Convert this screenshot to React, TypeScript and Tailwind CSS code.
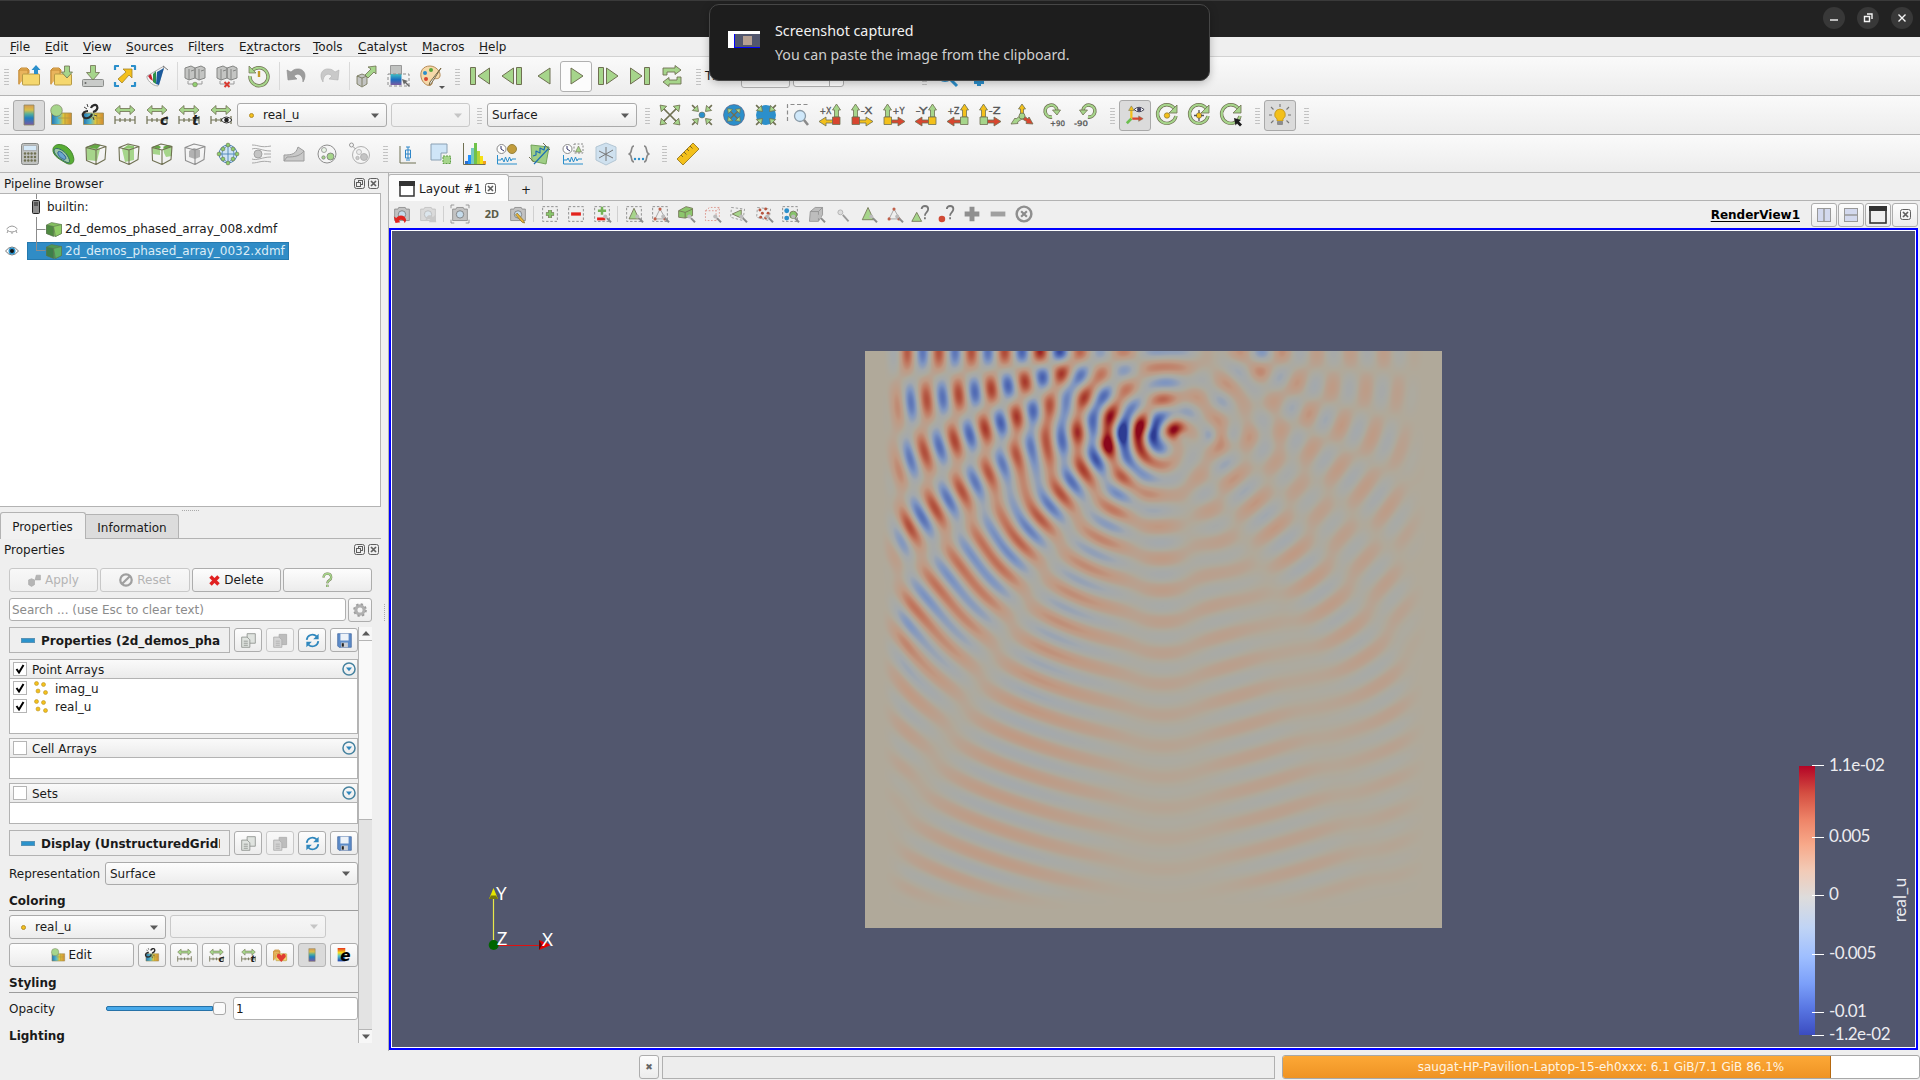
import { useEffect, useRef, type ReactNode } from "react";

type Kids = { children?: ReactNode };

const G = "#a6d58b";
const E = "#6f7052";
const Y = "#f3c01b";
const R = "#d8452f";
const B = "#2b8fcb";

/* ---------- wave field ---------- */

const FIELD = 577;
const WAVE_NUMBER = (2 * Math.PI) / 30.5;
const SOURCE_DEPTH = 84;
const AMPLITUDES = [
  -16, -4, 6, -2, -8, -1, 5, -2, 8, 14, -10, 12, 19, -13, 19, 19, -11, 28, -1, -2, 11, 1, -13, 2, 5, -6, -10, 0,
];
const RED_RAMP = [[176, 169, 154], [183, 162, 145], [191, 154, 132], [192, 120, 96], [172, 68, 50], [138, 4, 26]];
const BLUE_RAMP = [[176, 169, 154], [171, 170, 162], [164, 169, 172], [128, 150, 192], [80, 106, 180], [44, 58, 146]];
const STOPS = [0, 0.08, 0.25, 0.5, 0.8, 1.05];

const smooth = (a: number, b: number, v: number) => {
  const t = Math.min(1, Math.max(0, (v - a) / (b - a)));
  return t * t * (3 - 2 * t);
};
const bump = (x: number, y: number, cx: number, cy: number, rx: number, ry: number) =>
  Math.exp(-(((x - cx) / rx) ** 2) - ((y - cy) / ry) ** 2);

function fieldAt(x: number, y: number) {
  const w = smooth(15, 46, x) * smooth(12, 60, FIELD - x) * smooth(14, 60, FIELD - y);
  if (w === 0) return 0;
  let sum = 0;
  for (let n = 0; n < 14; n++) {
    const sx = 235 + n * 10;
    for (const sy of [SOURCE_DEPTH, -SOURCE_DEPTH]) {
      const d = Math.hypot(x - sx, y - sy, 6);
      const fall = Math.sqrt(d / 30);
      sum += (AMPLITUDES[2 * n] * Math.cos(WAVE_NUMBER * d) + AMPLITUDES[2 * n + 1] * Math.sin(WAVE_NUMBER * d)) / fall;
    }
  }
  const beam = 1 + 0.3 * smooth(260, 120, x) * smooth(420, 250, y) * smooth(110, 190, y);
  const core = 1 - 0.45 * bump(x, y, 294, 90, 13, 15);
  return ((sum * w) / 100) * beam * core + 0.4 * bump(x, y, 310, 78, 12, 9) - 0.35 * bump(x, y, 289, 76, 6, 14);
}

function WaveField() {
  const ref = useRef<HTMLCanvasElement>(null);
  useEffect(() => {
    const ctx = ref.current!.getContext("2d")!;
    const img = ctx.createImageData(FIELD, FIELD);
    for (let y = 0; y < FIELD; y++) {
      for (let x = 0; x < FIELD; x++) {
        const v = fieldAt(x, y);
        const m = Math.min(1.04, Math.abs(v));
        const ramp = v > 0 ? RED_RAMP : BLUE_RAMP;
        let i = 0;
        while (i < 4 && m > STOPS[i + 1]) i++;
        const t = (m - STOPS[i]) / (STOPS[i + 1] - STOPS[i]);
        const o = (y * FIELD + x) * 4;
        for (let c = 0; c < 3; c++) img.data[o + c] = ramp[i][c] * (1 - t) + ramp[i + 1][c] * t;
        img.data[o + 3] = 255;
      }
    }
    ctx.putImageData(img, 0, 0);
  }, []);
  return <canvas ref={ref} width={FIELD} height={FIELD} className="block h-[577px] w-[577px]" />;
}

/* ---------- icon helpers ---------- */

function Ic({ children, s = 22 }: Kids & { s?: number }) {
  return (
    <svg width={s} height={s} viewBox="0 0 22 22" fill="none" strokeLinejoin="round" className="shrink-0 overflow-visible">
      {children}
    </svg>
  );
}

const Folder = () => (
  <>
    <path d="M1 19V5l2-2h6l2 2v3" fill="#e9b45c" stroke="#c58a35" />
    <path d="M1 19.500V5h9v4" fill="#e9b45c" stroke="#c58a35" />
    <rect x="4.500" y="9" width="17" height="11" rx="1" fill="#f5d76e" stroke="#b79a45" />
  </>
);
const OpenIcon = () => <Ic><Folder /><path d="M18 0l4.500 5h-2.500v4h-4V5h-2.500z" fill={B} /></Ic>;
const RecentIcon = () => <Ic><Folder /><path d="M14.500 1h5v6h3l-5.500 6-5.500-6h3z" fill={G} stroke={E} strokeWidth=".8" /></Ic>;
const SaveDataIcon = () => (
  <Ic>
    <rect x=".5" y="14.500" width="21" height="7" rx="1" fill="#c9cbc9" stroke="#8b8d8b" />
    <path d="M8.500 .5h5v7h4L11 15 4.500 7.500h4z" fill={G} stroke={E} strokeWidth=".8" />
    <circle cx="3.500" cy="18" r="1" fill="#666" />
  </Ic>
);
const ExtractIcon = () => (
  <Ic>
    <path d="M1 5V1h4M17 1h4v4M21 17v4h-4M5 21H1v-4" stroke={B} strokeWidth="2.200" />
    <path d="M18 4v9l-3-3-7 8-4-4 8-7-3-3z" fill={Y} stroke="#a4842a" strokeWidth=".8" />
  </Ic>
);
const StateIcon = () => (
  <Ic>
    <path d="M18 1L1 11c-1 3 5 10 11 10z" fill="#f6f6f6" stroke="#999" strokeWidth=".8" />
    <path d="M2 11l3-2 2 7-3-2z" fill="#c8202f" />
    <path d="M7 9l3-3 0 13-3-2z" fill="#2d8f4a" />
    <path d="M11 7l7-4-5 17-3-1z" fill="#1b5a9c" />
    <path d="M17 1l5 4" stroke="#777" />
  </Ic>
);
const Server = ({ bad }: { bad?: boolean }) => (
  <Ic>
    <path d="M1 3l6-2 4 2v10l-6 2-4-2zM11 3l6-2 4 2v10l-6 2-4-2z" fill="#c4c5c3" stroke="#858684" />
    <path d="M5 4v11M15 4v11M7 6l3-1M17 6l3-1" stroke="#858684" />
    <path d="M4 16v3h14v-3" stroke="#9a9a9a" />
    {bad ? <path d="M8.500 17l5 5m0-5l-5 5" stroke="#d93a31" strokeWidth="2" /> : <circle cx="11" cy="19.500" r="2.300" fill="#8fd070" stroke={E} strokeWidth=".6" />}
  </Ic>
);
const TimerIcon = () => (
  <Ic>
    <path d="M4 6a9 9 0 1 1-2 5" stroke={E} strokeWidth="3.400" />
    <path d="M4 6a9 9 0 1 1-2 5" stroke={G} strokeWidth="2" />
    <path d="M1 1v7h7z" fill={G} stroke={E} strokeWidth=".7" />
    <path d="M11 6v6" stroke="#c59a2a" strokeWidth="2.400" />
  </Ic>
);
const UndoIcon = ({ flip }: { flip?: boolean }) => (
  <Ic>
    <path transform={flip ? "translate(22 0) scale(-1 1)" : undefined} d="M1 5l1 10 9 -1-3-3c4-4 9-1 9 6 5-8 0-14-6-13-2 0-4 1-6 3z" fill={flip ? "#c9c9c9" : "#9c9c9c"} stroke={flip ? "#b0b0b0" : "#8b8b8b"} strokeWidth=".6" />
  </Ic>
);
const FindIcon = () => (
  <Ic>
    <path d="M1 11l5-2 5 2v8l-5 3-5-3z" fill="#c3c4c2" stroke={E} strokeWidth=".8" />
    <path d="M1 11l5 2 5-2M6 13v8" stroke={E} strokeWidth=".8" />
    <path d="M20 1v8l-2-2-6 6-3-3 6-6-3-2z" fill={G} stroke={E} strokeWidth=".8" />
  </Ic>
);
const Spectrum = ({ id }: { id: string }) => (
  <linearGradient id={id} x1="0" y1="0" x2="0" y2="1">
    <stop offset="0" stopColor="#d79a52" /><stop offset=".25" stopColor="#d8bf4a" /><stop offset=".45" stopColor="#55b09a" />
    <stop offset=".65" stopColor="#1f7fc0" /><stop offset="1" stopColor="#7a5aa0" />
  </linearGradient>
);
const SelectColorIcon = () => (
  <Ic>
    <defs><linearGradient id="sp1" x1="0" y1="0" x2="0" y2="1"><stop offset="0" stopColor="#3fc0c4" /><stop offset=".5" stopColor="#1c6fc0" /><stop offset="1" stopColor="#7a5aa0" /></linearGradient></defs>
    <rect x="2.500" y=".5" width="11" height="9" fill="#c0c2c0" stroke="#999" />
    <rect x="2.500" y="9" width="11" height="11" fill="url(#sp1)" />
    <path d="M0 9h21v12H0z" stroke="#8a8a8a" strokeDasharray="3 2" />
    <path d="M14 14l6 2-2 1 4 4-1 1-4-4-1 2z" fill="#666" />
  </Ic>
);
const PaletteIcon = () => (
  <Ic>
    <path d="M10 1C3 1 0 6 1 12s7 10 10 8-1-5 2-6 6 1 7-3S16 1 10 1z" fill="#f6d9a9" stroke="#b58a55" />
    <circle cx="5" cy="8" r="2" fill={B} /><circle cx="11" cy="5" r="2" fill="#5aa63c" /><circle cx="6" cy="14" r="2" fill={R} />
    <path d="M21 3L11 19l-2 1 1-3z" fill="#eee" stroke="#7a6a45" />
    <path d="M19 21h6l-3 3z" fill="#555" />
  </Ic>
);

const tri = "stroke-[#6f7052]";
const FirstIcon = () => <Ic><path d="M1.500 2.500h5v17h-5zM20.500 3v16L9 11z" fill={G} className={tri} /></Ic>;
const PrevIcon = () => <Ic><path d="M15.500 2.500h5v17h-5zM12.500 3v16L1 11z" fill={G} className={tri} /></Ic>;
const BackIcon = () => <Ic><path d="M17 3v16L5 11z" fill={G} className={tri} /></Ic>;
const PlayIcon = () => <Ic><path d="M6 3v16l12-8z" fill={G} className={tri} /></Ic>;
const NextIcon = () => <Ic><path d="M1.500 2.500h5v17h-5zM9.500 3v16L21 11z" fill={G} className={tri} /></Ic>;
const LastIcon = () => <Ic><path d="M15.500 2.500h5v17h-5zM1.500 3v16L13 11z" fill={G} className={tri} /></Ic>;
const LoopIcon = () => (
  <Ic>
    <path d="M2 10V3h12V.500L20 5l-6 4.500V7H6v3zM20 12v7H8v2.500L2 17l6-4.500V15h8v-3z" fill={G} stroke={E} strokeWidth=".9" />
  </Ic>
);

const ColorBarIcon = ({ s = 22 }: { s?: number }) => (
  <Ic s={s}><defs><Spectrum id="sp2" /></defs><rect x="6" y="1" width="10" height="20" fill="url(#sp2)" stroke="#8a8563" strokeWidth=".8" /></Ic>
);
const Heat = ({ id }: { id: string }) => (
  <>
    <defs><linearGradient id={id}><stop offset="0" stopColor="#2473b0" /><stop offset=".35" stopColor="#57bccb" /><stop offset=".6" stopColor="#e0c63c" /><stop offset="1" stopColor="#cf8a34" /></linearGradient></defs>
    <rect x="1.500" y="9" width="20" height="11.500" fill={`url(#${id})`} stroke="#9a8c50" strokeWidth=".8" />
    <path d="M8 14h7v6M15 9v5h6" stroke="#b49a3e" strokeWidth=".9" />
  </>
);
const EditMapIcon = ({ s = 22 }: { s?: number }) => <Ic s={s}><Heat id="h1" /><circle cx="6.500" cy="6.500" r="5.800" fill={G} stroke={E} strokeWidth=".6" /></Ic>;
const SeparateMapIcon = ({ s = 22 }: { s?: number }) => (
  <Ic s={s}>
    <Heat id="h2" />
    <path d="M6 7c-3 0-6 2-5 5s5 3 8 0l1-2M9 4c1-3 5-4 6-2s0 5-4 6" stroke="#2b2b2b" strokeWidth="2.200" />
    <path d="M2 3l3 2M5 0l1 3M12 11l3 1M11 13l1 3" stroke="#444" />
  </Ic>
);
const RangeIcon = ({ mark, s = 22 }: { mark?: string; s?: number }) => (
  <Ic s={s}>
    <path d="M1 6l5-4.500V4.500h10V1.500L21 6l-5 4.500V7.500H6v3z" fill={G} stroke={E} strokeWidth=".8" />
    <path d="M1 12v8M21 12v8M1 16h20M6 14v4M11 14v4M16 14v4" stroke={E} strokeWidth="1.200" />
    {mark === "eye" ? (
      <><path d="M11 16q5.500-6 11 0-5.500 6-11 0z" fill="#fff" stroke="#333" /><circle cx="16.500" cy="16" r="2.300" fill="#222" /></>
    ) : mark ? (
      <text x="14" y="20.500" fontSize="14" fontWeight="700" fontStyle="italic" fill="#222" fontFamily="DejaVu Sans">{mark}</text>
    ) : null}
  </Ic>
);

const spokes = [45, 135, 225, 315];
const ResetIcon = () => (
  <Ic>{spokes.map(a => <g key={a} transform={`rotate(${a} 11 11)`}><path d="M11 11V1" stroke={E} strokeWidth="1.600" /><path d="M11 -3l-3.800 5.500h7.600z" fill={G} stroke={E} strokeWidth=".8" /></g>)}</Ic>
);
const InArrows = ({ r = 0 }: { r?: number }) => (
  <>{spokes.map(a => <g key={a} transform={`rotate(${a} 11 11)`}><path d={`M11 ${-3 + r}V${2 + r}`} stroke={E} strokeWidth="1.600" /><path d={`M11 ${6 + r}l-3.600-5h7.200z`} fill={G} stroke={E} strokeWidth=".8" /></g>)}</>
);
const ZoomToIcon = () => <Ic><circle cx="11" cy="11" r="3" fill={B} stroke={E} strokeWidth=".6" /><InArrows /></Ic>;
const ClosestIcon = () => (
  <Ic>
    <circle cx="11" cy="11" r="10.500" fill={B} stroke="#557" strokeWidth=".6" />
    {spokes.map(a => <g key={a} transform={`rotate(${a} 11 11)`}><path d="M11 11V5" stroke={E} strokeWidth="1.200" /><path d="M11 2l-3 4h6z" fill={G} stroke={E} strokeWidth=".7" /></g>)}
  </Ic>
);
const ClosestDataIcon = () => <Ic><circle cx="11" cy="11" r="10" fill={B} /><InArrows /></Ic>;
const ZoomBoxIcon = () => (
  <Ic>
    <path d="M.5 17V.5h20" stroke="#8c8c8c" strokeDasharray="4 2.500" strokeWidth="1.200" />
    <circle cx="13" cy="12" r="5.500" fill="#cfe8fa" stroke="#8a9aa6" strokeWidth="1.300" /><path d="M17 16l4 5" stroke="#8a8a8a" strokeWidth="2.600" />
  </Ic>
);
const AxisIcon = ({ label, left, up = G, side = Y, box = R }: { label: string; left?: boolean; up?: string; side?: string; box?: string }) => (
  <Ic>
    <g transform={left ? "translate(22 0) scale(-1 1)" : undefined}>
      <path d="M2.500 13V6H.5L4.500 0 8.500 6H6.500v7z" fill={up} stroke={E} strokeWidth=".8" />
      <path d="M8 16h7v-3l7 4.500-7 4.500v-3H8z" fill={side} stroke={E} strokeWidth=".8" />
      <rect x="1" y="13" width="7.500" height="7.500" fill={box} stroke={E} strokeWidth=".8" />
    </g>
    <text x={left ? 0.5 : 9.5} y="10" fontSize="8.500" textLength="12" lengthAdjust="spacingAndGlyphs" fill="#555" stroke="#555" strokeWidth=".3" fontFamily="DejaVu Sans">{label}</text>
  </Ic>
);
const IsoIcon = () => (
  <Ic>
    <path d="M9.500 11V5H7.500L11 0l3.500 5h-2v6z" fill={Y} stroke={E} strokeWidth=".8" />
    <path d="M10 11l-5 4-1-1-4 6 7-.500-.500-1.500 6-4z" fill={G} stroke={E} strokeWidth=".8" />
    <path d="M12 11l5 4 1-2 4 7-7-.500.500-2-5-3z" fill={R} stroke={E} strokeWidth=".8" />
    <circle cx="11" cy="12" r="3" fill={G} stroke={E} strokeWidth=".8" />
  </Ic>
);
const RotateIcon = ({ label, flip }: { label: string; flip?: boolean }) => (
  <Ic>
    <g transform={flip ? "translate(22 0) scale(-1 1)" : undefined}>
      <path d="M9 13A6 6 0 1 1 14 6" stroke={E} strokeWidth="3.600" /><path d="M9 13A6 6 0 1 1 14 6" stroke={G} strokeWidth="2" />
      <path d="M9.500 6h8l-3.500 5z" fill={G} stroke={E} strokeWidth=".8" />
    </g>
    <text x={flip ? -1 : 7} y="22" fontSize="7.500" textLength={flip ? 14 : 15} lengthAdjust="spacingAndGlyphs" fill="#555" stroke="#555" strokeWidth=".3" fontFamily="DejaVu Sans">{label}</text>
  </Ic>
);
const CenterAxesIcon = () => (
  <Ic s={20}>
    <path d="M7 15V4" stroke={Y} strokeWidth="2.500" /><path d="M4 6l3-5 3 5z" fill={Y} stroke={E} strokeWidth=".6" />
    <path d="M8 15h8" stroke={R} strokeWidth="2.500" /><path d="M15 12l5 3-5 3z" fill={R} stroke={E} strokeWidth=".5" />
    <path d="M7 15l-5 5" stroke="#6cbf4f" strokeWidth="3" />
    <path d="M10 5q5.500-5 11 0-5.500 5-11 0z" fill="#fff" stroke="#334" /><circle cx="15.500" cy="5" r="2.300" fill="#446" />
  </Ic>
);
const CenterIcon = ({ kind }: { kind: number }) => (
  <Ic>
    <path d="M18 4a9.300 9.300 0 1 0 2 8" stroke={E} strokeWidth="3.400" /><path d="M18 4a9.300 9.300 0 1 0 2 8" stroke={G} strokeWidth="2" />
    <path d="M21 1v8h-8z" fill={G} stroke={E} strokeWidth=".8" />
    {kind < 2 ? <circle cx="11" cy="11.500" r="2.700" fill={Y} stroke="#8a7430" strokeWidth=".7" /> : <path d="M14 14l7 2-2 1.500 3 3-2 2-3-3-1.500 2z" fill="#1b1b1b" />}
    {kind === 1 && <path d="M11 6v3M11 14v3M6 11.500h3M13 11.500h3" stroke="#555" strokeWidth="1.300" />}
  </Ic>
);
const BulbIcon = () => (
  <Ic>
    <path d="M11 5a5.500 5.500 0 0 0-3 10v2h6v-2a5.500 5.500 0 0 0-3-10z" fill={Y} stroke="#b28a1e" strokeWidth=".7" />
    <rect x="8" y="17" width="6" height="4" rx="1" fill="#8d8d8d" />
    <path d="M11 0v3M2 3l2.500 2.500M20 3l-2.500 2.500M0 11h3M19 11h3M2 19l2.500-2.500M20 19l-2.500-2.500" stroke="#777" strokeWidth="1.100" />
  </Ic>
);

const CalcIcon = () => (
  <Ic>
    <rect x="2.500" y=".5" width="17" height="21" rx="2" fill="#c0c2c0" stroke="#858785" />
    <rect x="4.500" y="2.500" width="13" height="5" fill="#d4e8f7" stroke="#999" strokeWidth=".6" />
    {[10.5, 14, 17.5].map(y => [6, 9.3, 12.6, 16].map(x => <circle key={`${x}-${y}`} cx={x} cy={y} r="1.200" fill={E} />))}
  </Ic>
);
const ContourIcon = () => (
  <Ic>
    <path d="M1 6C2-1 15 0 20 10s-1 13-6 10S0 13 1 6z" fill="#58ad35" stroke="#47862e" />
    <path d="M2 8c0-5 9-2 13 4s3 9-1 7S3 13 2 8z" fill="#9cc7a6" stroke="#336d6b" />
    <path d="M6 9c1-2 5 1 7 4s0 4-2 3-6-4-5-7z" fill="#6aa6cf" stroke="#2d5f94" />
  </Ic>
);
const Cube = ({ kind = 0, gray }: { kind?: number; gray?: boolean }) => {
  const e = gray ? "#8f8f8f" : E;
  const f = gray ? "#b2b2b2" : G;
  return (
    <Ic>
      {kind === 0 && <path d="M1 4l14 2-3 12-10-1z" fill={f} />}
      {kind === 0 && <path d="M1 4l9-3 6 1-4 4z" fill="#65a844" />}
      {kind === 1 && <path d="M4 6l12-1v12l-9 2z" fill={f} />}
      {kind === 1 && <path d="M4 6l6-4 6 1v2z" fill="#8cc66c" />}
      {kind === 2 && <path d="M1 4l8 2v6l-7-1zM12 5l9-2v10l-6 1-2-4z" fill={f} />}
      {kind === 2 && <path d="M1 4l6-2 3 2-2 2zM12 4l4-2 5 1-7 3z" fill="#65a844" />}
      {kind === 3 && <path d="M5 8l5-3 6 2v7l-5 2-6-2z" fill={f} />}
      <path d="M1 4.500L10 1l11 2.500-1 13-9 5-9.500-4zM1 4.500L11 7l10-3.500M11 7v14" stroke={e} strokeWidth="1.100" />
    </Ic>
  );
};
const GlyphIcon = () => (
  <Ic>
    <circle cx="11" cy="11" r="9" fill="#cfe4f5" stroke="#4d83b3" /><path d="M11 2v18M2 11h18M11 2C3 8 3 14 11 20M11 2c8 6 8 12 0 18" stroke="#4d83b3" strokeWidth=".9" />
    {[[11, 2], [11, 20], [2, 11], [20, 11], [6, 6], [16, 6], [6, 16], [16, 16]].map(p => <circle key={p.join()} cx={p[0]} cy={p[1]} r="1.900" fill="#8ccf6b" stroke={E} strokeWidth=".6" />)}
  </Ic>
);
const StreamIcon = () => (
  <Ic><path d="M2 2c7 0 8 3 19 1M2 6c5-2 10 2 19 2M14 11h7M2 16c5 2 10-2 19-2M2 20c7 0 8-3 19-1" stroke="#a9a9a9" /><circle cx="8" cy="11" r="4" fill="#c4c4c4" stroke="#a3a3a3" /></Ic>
);
const WarpIcon = () => <Ic><path d="M1 12c8 0 12-1 14-8l6 4v10H1z" fill="#c9c9c9" stroke="#9c9c9c" /><path d="M1 18l3-4c8 0 13-1 17-6" stroke="#9c9c9c" /></Ic>;
const GroupIcon = ({ gray }: { gray?: boolean }) => (
  <Ic>
    <circle cx={gray ? 12 : 11} cy={gray ? 12 : 11} r={gray ? 8.5 : 9} fill="#f5f5f5" stroke={gray ? "#b0b0b0" : "#8d8d8d"} />
    <circle cx={gray ? 15 : 14.500} cy={gray ? 14 : 13.500} r="3.500" fill={gray ? "#c4c4c4" : G} stroke={gray ? "#aaa" : "#777"} strokeWidth=".8" />
    <circle cx={gray ? 10 : 8} cy={gray ? 9 : 7} r="2.500" fill={gray ? "#eee" : "#e9f5e6"} stroke={gray ? "#b0b0b0" : "#8d8d8d"} strokeWidth=".8" />
    <circle cx={gray ? 8.5 : 7.500} cy={gray ? 15 : 14.500} r="1.700" fill={gray ? "#ccc" : G} stroke={gray ? "#aaa" : "#777"} strokeWidth=".7" />
    {gray && <><circle cx="2.500" cy="2" r="2" stroke="#999" /><path d="M4 3.500l2.500 2.500" stroke="#999" /></>}
  </Ic>
);

const BoxPlotIcon = () => <Ic><path d="M3 3v17h16" stroke={E} /><path d="M11 4v12M8.500 7h5v8h-5zM8.500 11h5M9 4h4M9 17h4" stroke="#2f86c8" /></Ic>;
const SelPlotIcon = () => <Ic><path d="M1 1h16v9h-6v7H1z" fill="#cfe5f7" stroke="#8aa0b3" /><rect x="13" y="13" width="7.500" height="7.500" fill={G} stroke="#5f9e45" strokeDasharray="2 1" /></Ic>;
const HistIcon = () => (
  <Ic>
    {[[2, 18, "#2a6fd0"], [5, 12, "#1e90ff"], [8, 5, "#76c9c0"], [11, 0, "#6fc24a"], [14, 8, "#b4d435"], [17, 13, "#f7e011"], [20, 18, "#f0a020"]].map(b => (
      <rect key={b[0]} x={b[0]} y={b[1]} width="3" height={21 - Number(b[1])} fill={String(b[2])} />
    ))}
    <path d="M.5 0v21.500h22" stroke={E} />
  </Ic>
);
const TimePlot = ({ sel }: { sel?: boolean }) => (
  <Ic>
    <circle cx="5.500" cy="6" r="4.500" fill="#fff" stroke="#8a8a8a" /><path d="M5 3v3l3 2" stroke="#336" />
    {sel ? <><path d="M12 1h9v9h-9z" stroke="#888" strokeDasharray="2 1.500" /><path d="M16.500 3l3 6h-6z" fill={G} stroke={E} strokeWidth=".6" /></> : <circle cx="16" cy="6" r="4.500" fill="#c29c3b" stroke="#98833f" />}
    <path d="M1.500 12v9H21M2 17h3l1-2 2 4 1.500-5 2 5 2-5 1.500 4 1-2h4" stroke={B} />
  </Ic>
);
const LinePlotIcon = () => <Ic><path d="M2 2l18 2-3 17-14-3z" fill="#9fce85" stroke="#73a35b" /><path d="M5 21L20 5M4 13l3-1 0-4 4 2 0-5 4 2 1-4" stroke="#1e6fb5" strokeWidth="1.200" /><path d="M0 14l5 5M14 0l7 7" stroke={E} /></Ic>;
const TestIcon = () => <Ic><path d="M11 0l10 4v13l-10 5L1 17V4z" fill="#cfe1ef" stroke="#b3c6d4" /><path d="M11 4v14M4 8l14 7M18 7L4 15" stroke="#777" /></Ic>;
const BracesIcon = () => (
  <Ic><path d="M6 3C2 3 5 10 1 11c4 1 1 8 5 8M16 3c4 0 1 7 5 8-4 1-1 8-5 8" stroke="#888" strokeWidth="1.600" />{[7, 11, 15].map(x => <circle key={x} cx={x} cy="16" r="1.200" fill={B} />)}</Ic>
);
const RulerIcon = () => <Ic><path d="M16 0l6 6L6 22l-6-6z" fill={Y} stroke="#a4842a" /><path d="M13 3l2.500 2.500M10 6l2 2M7 9l2.500 2.500M4 12l2 2" stroke="#7a6325" /></Ic>;

/* ---------- small view-toolbar icons ---------- */

const Lens = () => <><circle cx="15" cy="14" r="2.500" fill="#bbb" /><path d="M17 16l5 5" stroke="#8b8b8b" strokeWidth="2.400" /></>;
const Dash = () => <rect x="2" y="2" width="18" height="18" stroke="#8f8f8f" strokeDasharray="3 2.200" strokeWidth="1.200" />;
const Cam = ({ fade }: { fade?: boolean }) => (
  <g opacity={fade ? 0.45 : 1}><path d="M2 5h4l1-2h8l1 2h4v14H2z" fill="#c2c2c2" stroke="#888" /><circle cx="11" cy="11.500" r="4.500" fill="#c6dcec" stroke="#777" /></g>
);
const V = (p: Kids) => <Ic s={18}>{p.children}</Ic>;
const pts = (c: string) => <><path d="M11 5L5 17h13z" stroke="#999" />{[[11, 5], [5, 17], [17, 17]].map(p => <circle key={p.join()} cx={p[0]} cy={p[1]} r="1.900" fill={c} />)}</>;
const VIEW_ICONS: (ReactNode | "sep" | "gap")[] = [
  <V><Cam /><path d="M3 22L1 14l3 2c3-5 11-4 12 2 0 2-1 3-2 4 0-4-5-5-7-3l2 2z" fill="#e0241f" /></V>,
  <V><Cam fade /><path d="M20 12l-3 3c-4-5-9-2-9 5 3-4 5-3 6-2l-2 3h9z" fill="#c9c9c9" /></V>,
  "sep",
  <V><Cam /><path d="M0 4V0h4M18 0h4v4M22 18v4h-4M4 22H0v-4" stroke="#888" /></V>,
  "gap",
  <span className="font-['Noto_Sans'] text-[11px] font-bold text-[#5b5b46]">2D</span>,
  <V><Cam /><path d="M10 10l8 9 1 3-3-1-8-9z" fill="#e9b53a" stroke="#8a7430" /></V>,
  "sep",
  <V><Dash /><path d="M11 6v10M6 11h10" stroke={E} strokeWidth="4.500" /><path d="M11 6.500v9M6.500 11h9" stroke="#86c46a" strokeWidth="3" /></V>,
  <V><Dash /><path d="M5 11h12" stroke="#e3231d" strokeWidth="4" /></V>,
  <V><Dash /><path d="M11 2v10M6 7h10" stroke="#75b256" strokeWidth="3" /><path d="M5 17h10" stroke="#e3231d" strokeWidth="3.500" /><Lens /></V>,
  "sep",
  <V><Dash /><path d="M11 4l6 13H5z" fill={G} stroke={E} /><Lens /></V>,
  <V><Dash />{pts("#c0604a")}<Lens /></V>,
  <V><path d="M2 7l9-5 8 2v9l-9 3-8-1z" fill="#8cc66c" stroke={E} /><path d="M2 7l8 2 9-4M10 9v7" stroke={E} /><Lens /></V>,
  <V><path d="M3 7l5-4h12v11l-4 5H3zM3 7h13v12M16 7l4-4" stroke="#d98a80" strokeDasharray="2 2" /><Lens /></V>,
  <V><path d="M3 3l16 2-2 14L2 15z" stroke="#8f8f8f" strokeDasharray="3 2.200" /><path d="M4 11l11-5v10z" fill={G} stroke={E} /><Lens /></V>,
  <V><path d="M3 3l16 2-2 14L2 15z" stroke="#8f8f8f" strokeDasharray="3 2.200" />{[[6, 6], [13, 5], [9, 10], [16, 10], [7, 15], [13, 16]].map(p => <circle key={p.join()} cx={p[0]} cy={p[1]} r="1.800" fill="#b5553f" />)}<Lens /></V>,
  <V><Dash /><circle cx="7" cy="7" r="3" fill={B} /><circle cx="7" cy="16" r="3" fill={B} /><circle cx="15" cy="12" r="4.500" fill="#86c46a" stroke={E} /><Lens /></V>,
  <V><path d="M4 8l6-5h9v9l-5 8H3zM4 8h10v11M14 8l5-5" fill="#bdbdbd" stroke="#8f8f8f" /><Lens /></V>,
  <V><circle cx="9" cy="9" r="3" fill="#ddd" stroke="#aaa" /><path d="M12 12l7 8" stroke="#999" strokeWidth="2.200" /></V>,
  <V><path d="M11 3l7 15H4z" fill={G} stroke={E} /><Lens /></V>,
  <V>{pts("#c0604a")}<Lens /></V>,
  <V><path d="M7 9l6 11H1z" fill={G} stroke={E} /><path d="M13 5c0-5 8-5 8 0 0 4-4 4-4 8m0 2v2.500" stroke="#777" strokeWidth="2.200" /></V>,
  <V><circle cx="6" cy="17" r="4" fill="#d04a35" /><path d="M12 5c0-5 8-5 8 0 0 4-4 4-4 8m0 2v2.500" stroke="#777" strokeWidth="2.200" /></V>,
  <V><path d="M11 2v18M2 11h18" stroke="#8f8f8f" strokeWidth="6" /></V>,
  <V><path d="M2 11h18" stroke="#a0a0a0" strokeWidth="6" /></V>,
  <V><circle cx="11" cy="11" r="9" stroke="#8f8f8f" strokeWidth="3" /><path d="M7.500 7.500l7 7m0-7l-7 7" stroke="#8a8a8a" strokeWidth="2.600" /></V>,
];

/* ---------- widgets ---------- */

const Dots = () => <div className="h-[17px] w-[5px] bg-[radial-gradient(circle,#bdbdbd_0.8px,transparent_1px)] bg-[length:2.5px_3px]" />;
const StartGrip = () => <div className="flex w-[13px] shrink-0 items-center justify-center"><Dots /></div>;
const Grip = ({ w = "w-[17px] pr-[4px]" }: { w?: string }) => <div className={`flex shrink-0 items-center justify-end ${w}`}><Dots /></div>;
const Sep = () => <div className="flex w-[6px] shrink-0 items-center justify-end pr-[1px]"><div className="h-7 w-px bg-[#d9d9d9]" /></div>;
const Cell = ({ children, on, w = "w-8" }: Kids & { on?: "dark" | "light"; w?: string }) => (
  <div className={`flex h-[31px] ${w} shrink-0 items-center justify-center self-center rounded-[3px] ${on === "dark" ? "border border-[#a9a9a9] bg-[#dbdbdb]" : on === "light" ? "border border-[#b0b0b0] bg-[#fcfcfc]" : ""}`}>{children}</div>
);
const Bar = ({ children, h = "h-[39px]" }: Kids & { h?: string }) => (
  <div className={`flex ${h} shrink-0 items-stretch border-b border-[#b4b4b4] bg-linear-to-b from-[#fafafa] to-[#ededed]`}>{children}</div>
);
const Caret = ({ off }: { off?: boolean }) => (
  <svg width="8" height="5" viewBox="0 0 8 5"><path d="M0 .5h8L4 5z" fill={off ? "#c5c5c5" : "#5a5a5a"} /></svg>
);
const Combo = ({ children, w, off, h = "h-6" }: Kids & { w: string; off?: boolean; h?: string }) => (
  <div className={`flex ${h} ${w} shrink-0 items-center justify-between rounded-[3px] border bg-linear-to-b pr-[7px] pl-[4px] ${off ? "border-[#c9c9c9] from-[#f6f6f6] to-[#efefef]" : "border-[#aaaaaa] from-[#fdfdfd] to-[#ececec]"}`}>
    <span className="flex items-center">{children}</span><Caret off={off} />
  </div>
);
const PointDot = () => <span className="mr-[9px] ml-[7px] size-[5px] rounded-full border border-[#b48e2c] bg-[#f3c01b]" />;
const Btn = ({ children, w = "w-7", off, on }: Kids & { w?: string; off?: boolean; on?: boolean }) => (
  <div className={`flex h-6 ${w} shrink-0 items-center justify-center gap-1 rounded-[3px] border ${on ? "border-[#b5b5b5] bg-[#dadada]" : off ? "border-[#c8c8c8] bg-linear-to-b from-[#f8f8f8] to-[#efefef] text-[#b4b4b4]" : "border-[#adadad] bg-linear-to-b from-[#fdfdfd] to-[#ececec]"}`}>{children}</div>
);
const CloseBox = () => <svg width="11" height="11" fill="none" stroke="#5f5f5f"><rect x=".5" y=".5" width="10" height="10" rx="2" /><path d="M3 3l5 5m0-5l-5 5" strokeWidth="1.700" /></svg>;
const DockIcons = () => (
  <span className="flex gap-[3px]">
    <svg width="11" height="11" fill="none" stroke="#5f5f5f"><rect x=".5" y=".5" width="10" height="10" rx="2" /><rect x="4.500" y="2.500" width="4" height="4" /><rect x="2.500" y="4.500" width="4" height="4" fill="#efefef" /></svg>
    <CloseBox />
  </span>
);

const CopyIcon = ({ off }: { off?: boolean }) => (
  <Ic s={15}><g fill={off ? "#d4d4d4" : "#dfe3df"} stroke={off ? "#adadad" : "#8a908a"} strokeWidth="1.200">{off ? <path d="M9 2h11v15H9z" fill="#bdbdbd" /> : <path d="M9 1h12v14H9z" />}<path d="M1 6h8l4 4v11H1z" /><path d="M4 12h6M4 15h6M4 18h6" /></g></Ic>
);
const ReloadIcon = () => (
  <Ic s={15}><path d="M2.500 10A8.500 8.500 0 0 1 17 5M19.500 12A8.500 8.500 0 0 1 5 17" stroke="#2f87bd" strokeWidth="2.600" /><path d="M20 1v8h-8zM2 21v-8h8z" fill="#2f87bd" /></Ic>
);
const FloppyIcon = () => (
  <Ic s={15}><path d="M1 1h20v20H3l-2-2z" fill="#5d8cc9" stroke="#3d639c" /><rect x="5" y="1" width="12" height="10" fill="#edf2f8" /><rect x="6" y="14" width="10" height="7" fill="#c9ced6" /><rect x="7" y="15" width="3" height="5" fill="#222" /></Ic>
);
const Check = ({ on }: { on?: boolean }) => (
  <span className="flex size-[14px] shrink-0 items-center justify-center border border-[#b5b5b5] bg-white">
    {on && <svg width="10" height="10" viewBox="0 0 10 10" fill="none"><path d="M1.500 5l2.500 3.500L8.500 1" stroke="#000" strokeWidth="2" /></svg>}
  </span>
);
const Section = ({ title, on, h, children }: Kids & { title: string; on?: boolean; h: string }) => (
  <div className={`${h} w-[349px] shrink-0 border border-[#b3b3b3] bg-white`}>
    <div className="flex h-[19px] items-center gap-[5px] border-b border-[#b3b3b3] bg-linear-to-b from-[#fafafa] to-[#ebebeb] pr-[1px] pl-[3px]">
      <Check on={on} /><span className="pt-[2px]">{title}</span>
      <svg width="14" height="14" viewBox="0 0 13 13" fill="none" className="ml-auto"><circle cx="6.500" cy="6.500" r="5.600" stroke="#46829f" strokeWidth="1.400" /><path d="M3.700 5h5.600L6.500 8.500z" fill="#2f87bd" /></svg>
    </div>
    {children}
  </div>
);
const ArrayRow = ({ name }: { name: string }) => (
  <div className="flex h-[18px] items-center pl-[3px]">
    <Check on />
    <svg width="16" height="14" viewBox="0 0 16 14" className="mr-[6px] ml-[6px]" fill="#f3c01b" stroke="#b9932f" strokeWidth=".6"><circle cx="3.500" cy="2.500" r="2" /><circle cx="10.500" cy="3.500" r="2" /><circle cx="5" cy="10" r="2" /><circle cx="12.500" cy="11.500" r="2" /></svg>
    <span className="pt-[2px]">{name}</span>
  </div>
);
const GroupHeader = ({ title }: { title: string }) => (
  <div className="flex h-[26px] w-[349px] shrink-0 items-center gap-1">
    <div className="flex h-[26px] w-[221px] shrink-0 items-center border border-[#b3b3b3] pr-[9px] pl-[11px]">
      <span className="mr-[6px] h-[5px] w-[14px] shrink-0 border border-[#5a93b5] bg-[#2b93cc]" />
      <b className="overflow-hidden pt-px whitespace-nowrap">{title}</b>
    </div>
    <Btn><CopyIcon /></Btn><Btn off><CopyIcon off /></Btn><Btn><ReloadIcon /></Btn><Btn><FloppyIcon /></Btn>
  </div>
);
const Heading = ({ children }: Kids) => <div className="h-[18px] w-[349px] shrink-0 border-b border-[#9c9c9c] leading-[17px] font-bold">{children}</div>;

const CubeSmall = ({ dark }: { dark?: boolean }) => (
  <svg width="16" height="15" viewBox="0 0 16 15" stroke="#5c7450" strokeWidth=".6" className="shrink-0"><path d="M.5 3l5-2.500 10 2v9l-6 3-9-3z" fill={dark ? "#4d9a55" : "#82be5e"} /><path d="M.5 3l7 1.500v10L.5 11.500z" fill={dark ? "#3d7f4a" : "#4f8a42"} /><path d="M7.500 4.500l8-2v9l-6 3z" fill={dark ? "#5fb062" : "#8fcc66"} /></svg>
);

const MENU: [string, string, string, string][] = [
  ["", "F", "ile", "w-[35px]"], ["", "E", "dit", "w-[38px]"], ["", "V", "iew", "w-[43px]"], ["", "S", "ources", "w-[62px]"], ["Fi", "l", "ters", "w-[51px]"],
  ["E", "x", "tractors", "w-[74px]"], ["", "T", "ools", "w-[45px]"], ["", "C", "atalyst", "w-[64px]"], ["", "M", "acros", "w-[57px]"], ["", "H", "elp", "w-[60px]"],
];

/* ---------- panels ---------- */

function Toolbars() {
  return (
    <>
      <Bar>
        <StartGrip />
        <Cell><OpenIcon /></Cell><Cell><RecentIcon /></Cell><Cell><SaveDataIcon /></Cell><Cell><ExtractIcon /></Cell><Cell><StateIcon /></Cell><Sep />
        <Cell><Server /></Cell><Cell><Server bad /></Cell><Cell><TimerIcon /></Cell><Sep />
        <Cell><UndoIcon /></Cell><Cell><UndoIcon flip /></Cell><Sep />
        <Cell><FindIcon /></Cell><Cell><SelectColorIcon /></Cell><Cell><PaletteIcon /></Cell>
        <Grip />
        <Cell><FirstIcon /></Cell><Cell><PrevIcon /></Cell><Cell><BackIcon /></Cell><Cell on="light"><PlayIcon /></Cell><Cell><NextIcon /></Cell><Cell><LastIcon /></Cell><Cell><LoopIcon /></Cell>
        <Grip />
        <div className="flex w-9 items-center">Time:</div>
        <div className="flex items-center gap-[3px]">
          <span className="h-[23px] w-[49px] rounded-[3px] border border-[#b0b0b0] bg-[#f6f6f6]" />
          <span className="flex h-[22px] w-[51px] justify-end rounded-[3px] border border-[#b0b0b0] bg-white"><i className="w-[14px] border-l border-[#b0b0b0]" /></span>
        </div>
        <Grip w="w-[87px] pr-[4px]" />
        <Cell><Ic><circle cx="9" cy="9" r="7" stroke={B} strokeWidth="2" /><path d="M14 14l7 7" stroke={B} strokeWidth="3" /></Ic></Cell>
        <Cell><Ic><path d="M11 1v20M6 17h10" stroke={B} strokeWidth="4" /></Ic></Cell>
      </Bar>
      <Bar>
        <StartGrip />
        <Cell on="dark"><ColorBarIcon /></Cell><Cell><EditMapIcon /></Cell><Cell><SeparateMapIcon /></Cell><Cell><RangeIcon /></Cell><Cell><RangeIcon mark="c" /></Cell><Cell><RangeIcon mark="t" /></Cell><Cell><RangeIcon mark="eye" /></Cell>
        <div className="flex items-center gap-1"><Combo w="w-[150px]"><PointDot />real_u</Combo><Combo w="w-[79px]" off /></div>
        <Grip w="w-[17px] pr-[5px]" />
        <div className="flex items-center"><Combo w="w-[150px]">Surface</Combo></div>
        <Grip />
        <Cell><ResetIcon /></Cell><Cell><ZoomToIcon /></Cell><Cell><ClosestIcon /></Cell><Cell><ClosestDataIcon /></Cell><Cell><ZoomBoxIcon /></Cell>
        <Cell><AxisIcon label="+X" left /></Cell><Cell><AxisIcon label="-X" /></Cell><Cell><AxisIcon label="+Y" side={R} box={Y} /></Cell><Cell><AxisIcon label="-Y" left side={R} box={Y} /></Cell>
        <Cell><AxisIcon label="+Z" left up={Y} side={R} box={G} /></Cell><Cell><AxisIcon label="-Z" up={Y} side={R} box={G} /></Cell><Cell><IsoIcon /></Cell><Cell><RotateIcon label="+90" /></Cell><Cell><RotateIcon label="-90" flip /></Cell>
        <Grip />
        <Cell on="dark"><CenterAxesIcon /></Cell><Cell><CenterIcon kind={0} /></Cell><Cell><CenterIcon kind={1} /></Cell><Cell><CenterIcon kind={2} /></Cell>
        <Grip />
        <Cell on="dark"><BulbIcon /></Cell>
        <Grip w="w-[13px]" />
      </Bar>
      <Bar h="h-[38px]">
        <StartGrip />
        {[<CalcIcon />, <ContourIcon />, <Cube />, <Cube kind={1} />, <Cube kind={2} />, <Cube kind={3} gray />, <GlyphIcon />, <StreamIcon />, <WarpIcon />, <GroupIcon />, <GroupIcon gray />].map((n, i) => <Cell key={i} w="w-[33px]">{n}</Cell>)}
        <Grip w="w-[15px] pr-[3px]" />
        {[<BoxPlotIcon />, <SelPlotIcon />, <HistIcon />, <TimePlot />, <LinePlotIcon />, <TimePlot sel />, <TestIcon />, <BracesIcon />].map((n, i) => <Cell key={i} w="w-[33px]">{n}</Cell>)}
        <Grip w="w-[16px] pr-[4px]" />
        <Cell w="w-[33px]"><RulerIcon /></Cell>
      </Bar>
    </>
  );
}

function PipelineBrowser() {
  return (
    <>
      <div className="flex h-5 shrink-0 items-center justify-between pt-px pr-[2px] pl-1">Pipeline Browser<DockIcons /></div>
      <div className="relative h-[314px] shrink-0 border border-l-0 border-[#b3b3b3] bg-white">
        <svg width="30" height="60" fill="none" stroke="#8c8c8c" className="absolute top-0 left-[27px] z-10"><path d="M9.500 0v5M9.500 23v34M9.500 35.500h9M9.500 56.500h9" /></svg>
        <div className="flex h-6 items-center pt-px pl-[32px]">
          <svg width="8" height="14"><rect x=".5" y=".5" width="7" height="13" rx="1" fill="#8f8f8f" stroke="#222" /><path d="M2 3h4M2 5h4" stroke="#222" /></svg>
          <span className="ml-[7px]">builtin:</span>
        </div>
        <div className="flex h-[22px] items-center">
          <svg width="12" height="9" fill="none" stroke="#9a9a9a" className="mr-[28px] ml-[6px]"><path d="M.5 4q5.500-6 11 0M1 5q5 4 10 0M2 6l-1 2M6 7v2M10 6l1 2" /></svg>
          <CubeSmall /><span className="ml-[3px]">2d_demos_phased_array_008.xdmf</span>
        </div>
        <div className="flex h-[22px] items-center">
          <svg width="14" height="10" className="mr-[8px] ml-[5px]"><path d="M.5 5q6.500-8 13 0-6.500 8-13 0z" fill="#fff" stroke="#777" /><circle cx="7" cy="5" r="3.500" fill="#2b93cc" /><circle cx="7" cy="5" r="2" fill="#111" /></svg>
          <div className="flex h-[18px] w-[262px] items-center border border-[#2579ae] bg-[#308cc6] pl-[18px] text-[#dcecf6]">
            <CubeSmall dark /><span className="ml-[3px] whitespace-nowrap">2d_demos_phased_array_0032.xdmf</span>
          </div>
        </div>
      </div>
    </>
  );
}

function PropertiesPanel() {
  return (
    <>
      <div className="flex h-[6px] shrink-0 items-center justify-center"><span className="w-[17px] border-t border-dotted border-[#aaa]" /></div>
      <div className="flex h-[26px] shrink-0 items-end border-b border-[#b3b3b3]">
        <div className="-mb-px flex h-[27px] w-[86px] items-center justify-center rounded-t-[3px] border border-b-0 border-[#b3b3b3] bg-[#f1f1f1] pr-[1px] pt-px">Properties</div>
        <div className="flex h-[24px] w-[93px] items-center justify-center rounded-tr-[3px] border border-b-0 border-l-0 border-[#b3b3b3] bg-[#dcdcdc] pt-[2px]">Information</div>
      </div>
      <div className="flex h-[21px] shrink-0 items-center justify-between pr-[2px] pl-1">Properties<DockIcons /></div>
      <div className="flex flex-1 flex-col pt-[8px] pl-[9px]">
        <div className="flex gap-[2px]">
          <Btn w="w-[89px]" off><Ic s={13}><path d="M1 10l5-2 5 2v8l-5 3-5-3zM12 10l2-8h7v8z" fill="#b5b5b5" stroke="#a5a5a5" /></Ic>Apply</Btn>
          <Btn w="w-[90px]" off><Ic s={14}><circle cx="11" cy="11" r="9" stroke="#9f9f9f" strokeWidth="3.500" /><path d="M5 17L17 5" stroke="#9f9f9f" strokeWidth="3.500" /></Ic>Reset</Btn>
          <Btn w="w-[89px]"><Ic s={11}><path d="M3 3l16 16m0-16L3 19" stroke="#e02020" strokeWidth="7" /></Ic>Delete</Btn>
          <Btn w="w-[89px]"><Ic s={14}><path d="M4 7c0-8 12-8 12 0 0 5-6 4-6 9m0 2.500V22" stroke={E} strokeWidth="3.600" /><path d="M4 7c0-8 12-8 12 0 0 5-6 4-6 9m0 2.500V22" stroke={G} strokeWidth="2.400" /></Ic></Btn>
        </div>
        <div className="mt-[6px] flex h-[24px] gap-[2px]">
          <div className="flex h-[23px] w-[337px] items-center rounded-[3px] border border-[#b0b0b0] bg-white pl-[2px] text-[#8b8b8b]">Search ... (use Esc to clear text)</div>
          <Btn w="w-6"><Ic s={14}><circle cx="11" cy="11" r="6.500" stroke="#b0b0b0" strokeWidth="5" /><circle cx="11" cy="11" r="9.500" stroke="#9b9b9b" strokeWidth="2.500" strokeDasharray="3.730 3.730" /></Ic></Btn>
        </div>
        <div className="mt-[5px] flex h-[416px] w-[363px] overflow-hidden">
          <div className="flex h-[416px] w-[349px] shrink-0 flex-col overflow-hidden">
            <GroupHeader title="Properties (2d_demos_pha" />
            <div className="h-[6px] shrink-0" />
            <Section title="Point Arrays" on h="h-[75px]"><ArrayRow name="imag_u" /><ArrayRow name="real_u" /></Section>
            <div className="h-[4px] shrink-0" />
            <Section title="Cell Arrays" h="h-[41px]" />
            <div className="h-[4px] shrink-0" />
            <Section title="Sets" h="h-[41px]" />
            <div className="h-[6px] shrink-0" />
            <GroupHeader title="Display (UnstructuredGridRepresentation)" />
            <div className="mt-[6px] flex items-center justify-between">Representation<Combo w="w-[253px]" h="h-[23px]">Surface</Combo></div>
            <div className="h-[8px] shrink-0" />
            <Heading>Coloring</Heading>
            <div className="mt-[4px] flex gap-1"><Combo w="w-[157px]"><PointDot />real_u</Combo><Combo w="w-[156px]" off h="h-[23px]" /></div>
            <div className="mt-[4px] flex gap-1">
              <Btn w="w-[125px]"><EditMapIcon s={14} /><span className="-ml-px">Edit</span></Btn>
              <Btn><SeparateMapIcon s={14} /></Btn><Btn><RangeIcon s={15} /></Btn><Btn><RangeIcon s={15} mark="c" /></Btn><Btn><RangeIcon s={15} mark="t" /></Btn>
              <Btn><Ic s={14}><Folder /><path d="M13 22l-7-8c-1-6 5-6 7-2 2-4 8-4 7 2z" fill="#e03c31" /></Ic></Btn>
              <Btn on><ColorBarIcon s={14} /></Btn>
              <Btn><Ic s={14}><defs><linearGradient id="jet" x1="0" y1="0" x2="0" y2="1"><stop offset="0" stopColor="#e8301c" /><stop offset=".35" stopColor="#f5e01a" /><stop offset=".6" stopColor="#4fc3c9" /><stop offset="1" stopColor="#1d3fae" /></linearGradient></defs><rect x="1" y="0" width="12" height="21" fill="url(#jet)" /><text x="5" y="21" fontSize="24" fontWeight="700" fontStyle="italic" fill="#000" fontFamily="DejaVu Sans">e</text></Ic></Btn>
            </div>
            <div className="h-[8px] shrink-0" />
            <Heading>Styling</Heading>
            <div className="mt-[4px] flex shrink-0 items-center">
              <span className="w-[97px]">Opacity</span>
              <div className="flex w-[120px] items-center">
                <span className="h-[5px] flex-1 rounded-l-[2px] border border-[#2672a8] bg-[#47a9ea]" />
                <span className="size-[13px] rounded-[3px] border border-[#a8a8a8] bg-[#fafafa]" />
              </div>
              <div className="ml-[7px] flex h-[23px] w-[125px] items-center rounded-[3px] border border-[#b0b0b0] bg-white pl-[2px]">1</div>
            </div>
            <div className="mt-[8px] shrink-0 font-bold">Lighting</div>
          </div>
          <div className="flex w-[14px] shrink-0 flex-col border-l border-[#b5b5b5] bg-[#e3e3e3]">
            <div className="flex h-[14px] items-center justify-center border-b border-[#b5b5b5] bg-[#f7f7f7]"><div className="mb-[1px] rotate-180"><Caret /></div></div>
            <div className="h-[179px] border-b border-[#b5b5b5] bg-[#f9f9f9]" />
            <div className="mt-auto flex h-[14px] items-center justify-center border-t border-[#b5b5b5] bg-[#f7f7f7]"><Caret /></div>
          </div>
        </div>
      </div>
    </>
  );
}

const TICKS: [string, string, string][] = [
  ["top-[765px]", "top-[753px]", "1.1e-02"], ["top-[837px]", "top-[824px]", "0.005"], ["top-[895px]", "top-[882px]", "0"],
  ["top-[954px]", "top-[941px]", "-0.005"], ["top-[1012px]", "top-[999px]", "-0.01"], ["top-[1035px]", "top-[1022px]", "-1.2e-02"],
];

/* Annotations are anchored to the window origin so they line up with the rendered scene. */
function Overlays() {
  return (
    <div className="absolute top-0 left-0 font-['Lato'] text-[17px] leading-6 tracking-[-0.5px] text-[#ececf0]">
      <div className="absolute top-[351px] left-[865px]"><WaveField /></div>
      <svg width="80" height="80" viewBox="480 880 80 80" className="absolute top-[880px] left-[480px]">
        <path d="M493.500 944V896" stroke="#e8e84a" strokeWidth="1.200" /><path d="M493.500 888l4.500 11h-9z" fill="#e6e600" /><path d="M489 899l2-3.500h5l2 3.500z" fill="#77770a" />
        <path d="M498 945.500h42" stroke="#e01010" strokeWidth="1.200" /><path d="M551 945l-12-5v10z" fill="#e60000" /><path d="M539 940l3 5-3 5z" fill="#5a0a0a" />
        <circle cx="493.700" cy="945" r="5" fill="#006400" />
      </svg>
      <span className="absolute top-[882px] left-[496px] text-white">Y</span>
      <span className="absolute top-[927px] left-[497px] text-white">Z</span>
      <span className="absolute top-[928px] left-[542px] text-white">X</span>
      <div className="absolute top-[766px] left-[1799px] h-[269px] w-4 bg-[linear-gradient(to_bottom,#b40426,#d44e41_10%,#ee8468_20%,#f7a889_29%,#f2cbb7_39%,#dddcdc_49%,#c0d4f5_60%,#9ebeff_71%,#7b9ff9_81%,#5977e3_90%,#3b4cc0)]" />
      {TICKS.map(([line, label, text]) => (
        <div key={text}>
          <i className={`absolute left-[1812px] h-px w-3 bg-white ${line}`} />
          <span className={`absolute left-[1829px] whitespace-nowrap ${label}`}>{text}</span>
        </div>
      ))}
      <span className="absolute top-[888px] left-[1870px] flex w-[60px] -rotate-90 justify-center tracking-normal">real_u</span>
    </div>
  );
}

function Toast() {
  return (
    <div className="absolute top-[4px] left-[709px] flex h-[77px] w-[501px] rounded-[10px] border border-[#464646] bg-[#1d1d1d] pt-[14px] pl-[18px] font-['Noto_Sans'] leading-6 shadow-[0_2px_8px_rgba(0,0,0,0.25)]">
      <div className="mt-[12px] flex h-[17px] w-8 shrink-0 bg-white pl-[6px]">
        <div className="mt-[3px] flex flex-1 items-center justify-center border-b border-l border-[#0000ff] bg-[#52576e]"><span className="size-[9px] bg-[#b5a092]" /></div>
      </div>
      <div className="ml-[15px]">
        <div className="text-[14.3px] whitespace-nowrap text-[#f2f2f2]">Screenshot captured</div>
        <div className="text-[14.2px] whitespace-nowrap text-[#cfcfcf]">You can paste the image from the clipboard.</div>
      </div>
    </div>
  );
}

export default function App() {
  return (
    <div className="relative flex h-[1080px] w-[1920px] flex-col overflow-hidden bg-[#efefef] font-['DejaVu_Sans',sans-serif] text-[12px] leading-4 text-[#1a1a1a]">
      <div className="flex h-[37px] shrink-0 items-center justify-end gap-3 border-t border-[#3a3a3a] bg-[#222222] pr-[7px] pb-[2px]">
        {["M7 13h8", "M7.500 9.500h5v5h-5zM10 7h5v5", "M7.500 7.500l7 7m0-7l-7 7"].map(d => (
          <svg key={d} width="22" height="22" fill="none"><circle cx="11" cy="11" r="11" fill="#383838" /><path d={d} stroke="#f5f5f5" strokeWidth="1.400" /></svg>
        ))}
      </div>
      <div className="flex h-5 shrink-0 items-center border-b border-[#d2d2d2] pl-[10px]">
        {MENU.map(([a, u, b, w]) => <span key={a + u} className={`${w} whitespace-nowrap`}>{a}<span className="underline underline-offset-2">{u}</span>{b}</span>)}
      </div>
      <Toolbars />
      <div className="flex h-[878px] shrink-0">
        <div className="flex w-[381px] shrink-0 flex-col"><PipelineBrowser /><PropertiesPanel /></div>
        <div className="flex w-[7px] shrink-0 items-center justify-center"><span className="h-[17px] border-l border-dotted border-[#aaa]" /></div>
        <div className="flex min-w-0 flex-1 flex-col border-l border-[#b3b3b3]">
          <div className="-ml-px flex h-7 shrink-0 items-end border-b border-[#b3b3b3]">
            <div className="-mb-px flex h-[27px] w-[121px] items-center gap-1 rounded-t-[3px] border border-b-0 border-[#b3b3b3] bg-[#fcfcfc] pt-px pl-[10px]">
              <svg width="16" height="16"><rect x="1" y="1" width="14" height="14" fill="#fff" stroke="#333" strokeWidth="1.500" /><rect width="16" height="5" fill="#333" /></svg>
              Layout #1<CloseBox />
            </div>
            <div className="flex h-[24px] w-[34px] items-center justify-center rounded-tr-[3px] border border-b-0 border-l-0 border-[#b3b3b3] bg-[#e9e9e9] pt-[2px] pl-px">+</div>
          </div>
          <div className="flex h-[27px] shrink-0 items-center">
            {VIEW_ICONS.map((n, i) => n === "sep" ? <i key={i} className="mr-[3px] mb-[2px] ml-[2px] h-[16px] w-px bg-[#d0d0d0]" /> : n === "gap" ? <i key={i} className="w-[6px]" /> : <span key={i} className="flex w-[26px] shrink-0 items-center justify-center pb-[2px]">{n}</span>)}
            <b className="mr-[11px] ml-auto text-[12px] text-black underline underline-offset-2">RenderView1</b>
            <div className="mr-[2px] flex gap-px">
              {[
                <svg width="14" height="14"><rect x=".5" y=".5" width="13" height="13" fill="#d3d9ee" stroke="#999" /><path d="M7 0v14" stroke="#999" strokeWidth="1.500" /></svg>,
                <svg width="14" height="14"><rect x=".5" y=".5" width="13" height="13" fill="#d3d9ee" stroke="#999" /><path d="M0 7h14" stroke="#999" strokeWidth="1.500" /></svg>,
                <svg width="18" height="18"><rect x="1" y="1" width="16" height="16" fill="#eee" stroke="#333" strokeWidth="1.600" /><rect width="18" height="5" fill="#333" /></svg>,
                <CloseBox />,
              ].map((n, i) => <Btn key={i} w="w-[26px]">{n}</Btn>)}
            </div>
          </div>
          <div className="mr-[2px] h-[822px] shrink-0 border-2 border-[#0000ff]"><div className="h-full border border-white bg-[#52576e]" /></div>
        </div>
      </div>
      <div className="flex flex-1 items-center pt-[3px] pl-[639px]">
        <Btn w="w-5"><span className="text-[9px] text-[#666]">✖</span></Btn>
        <div className="ml-[3px] h-[23px] w-[613px] border border-[#b0b0b0] bg-[#ededed]" />
        <div className="relative ml-[7px] flex h-[24px] flex-1 items-center justify-center overflow-hidden rounded-[3px] border border-[#a8a8a8] bg-white">
          <div className="absolute inset-y-0 left-0 w-[548px] border-r border-[#b5680f] bg-linear-to-b from-[#fca836] to-[#ef9323]" />
          <span className="relative text-[#fff4e2]">saugat-HP-Pavilion-Laptop-15-eh0xxx: 6.1 GiB/7.1 GiB 86.1%</span>
        </div>
      </div>
      <Overlays />
      <Toast />
    </div>
  );
}
